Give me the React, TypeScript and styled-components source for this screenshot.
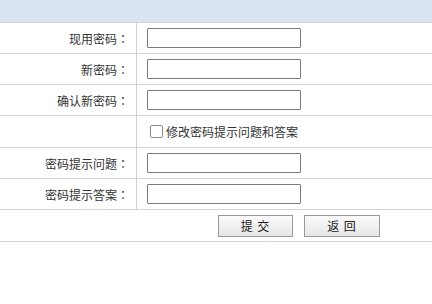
import React from 'react';
import styled, { createGlobalStyle } from 'styled-components';

const GlobalStyle = createGlobalStyle`
  html, body {
    margin: 0;
    padding: 0;
    background: #fff;
  }
  body {
    font-family: "Noto Sans CJK SC", "Liberation Sans", sans-serif;
    font-size: 12px;
    color: #333;
  }
`;

const Page = styled.div`
  width: 432px;
`;

const TitleBar = styled.div`
  height: 22px;
  background: #d8e4f1;
  border-bottom: 1px solid #d3d3d3;
`;

const FormTable = styled.div`
  display: grid;
  grid-template-columns: 137px 1fr;
`;

const LabelCell = styled.div<{ $tall?: boolean }>`
  height: ${p => (p.$tall ? 31 : 30)}px;
  display: flex;
  align-items: center;
  justify-content: flex-end;
  padding-right: 7px;
  border-right: 1px solid #d3d3d3;
  border-bottom: 1px solid #d3d3d3;
  color: #333;
`;

// centred full-width colon, as in the original font
const Colon = styled.span`
  font-family: "Noto Sans CJK JP", "Noto Sans CJK SC", sans-serif;
`;

const FieldCell = styled.div<{ $tall?: boolean }>`
  height: ${p => (p.$tall ? 31 : 30)}px;
  display: flex;
  align-items: center;
  padding-left: 10px;
  border-bottom: 1px solid #d3d3d3;
`;

const ButtonRow = styled.div`
  grid-column: 1 / span 2;
  height: 31px;
  display: flex;
  align-items: center;
  padding-left: 218px;
  gap: 11px;
  border-bottom: 1px solid #d3d3d3;
`;

const TextInput = styled.input`
  box-sizing: border-box;
  width: 154px;
  height: 20px;
  margin: 0;
  padding: 0 3px;
  border: 1px solid #7a7a7a;
  border-radius: 1px;
  background: #fff;
  font: inherit;
`;

const CheckLabel = styled.label`
  display: flex;
  align-items: center;
  gap: 3px;
  padding-left: 3px;
  color: #333;
`;

const CheckBox = styled.input`
  appearance: none;
  box-sizing: border-box;
  width: 13px;
  height: 13px;
  margin: 0;
  border: 1px solid #8a8a8a;
  border-radius: 2px;
  background: #fff;
`;

const Button = styled.button<{ $w: number }>`
  box-sizing: border-box;
  width: ${p => p.$w}px;
  height: 22px;
  margin: 0;
  padding: 0;
  border: 1px solid #999;
  background: linear-gradient(#fafafa, #e6e6e6);
  font: inherit;
  font-size: 12px;
  color: #222;
  letter-spacing: 1px;
`;

const fields = ['现用密码', '新密码', '确认新密码'];
const hintFields = ['密码提示问题', '密码提示答案'];

const App: React.FC = () => {
  return (
    <Page>
      <GlobalStyle />
      <TitleBar />
      <FormTable>
        {fields.map(label => (
          <React.Fragment key={label}>
            <LabelCell>
              {label}
              <Colon>：</Colon>
            </LabelCell>
            <FieldCell>
              <TextInput type="password" />
            </FieldCell>
          </React.Fragment>
        ))}
        <LabelCell $tall />
        <FieldCell $tall>
          <CheckLabel>
            <CheckBox type="checkbox" />
            修改密码提示问题和答案
          </CheckLabel>
        </FieldCell>
        {hintFields.map(label => (
          <React.Fragment key={label}>
            <LabelCell>
              {label}
              <Colon>：</Colon>
            </LabelCell>
            <FieldCell>
              <TextInput type="text" />
            </FieldCell>
          </React.Fragment>
        ))}
        <ButtonRow>
          <Button $w={75}>提 交</Button>
          <Button $w={76}>返 回</Button>
        </ButtonRow>
      </FormTable>
    </Page>
  );
};

export default App;
